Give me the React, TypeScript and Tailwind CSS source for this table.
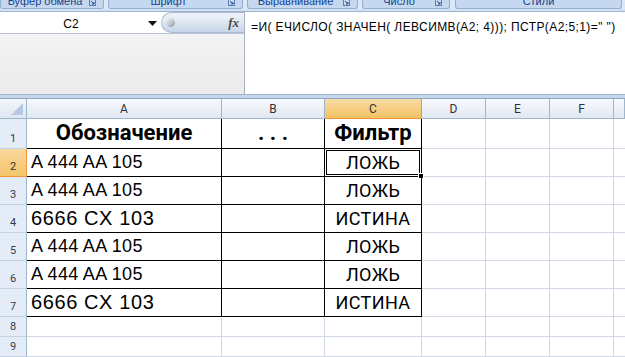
import React from "react";

const groups = [
  { label: "Буфер обмена", w: "w-[104px]", ml: "ml-0", launcher: true },
  { label: "Шрифт", w: "w-[135px]", ml: "ml-[4px]", launcher: true },
  { label: "Выравнивание", w: "w-[111px]", ml: "ml-[4px]", launcher: true },
  { label: "Число", w: "w-[88px]", ml: "ml-[4px]", launcher: true },
  { label: "Стили", w: "w-[167px]", ml: "ml-[5px]", launcher: false },
];

type Row = {
  n: number;
  a?: string;
  b?: string;
  c?: string;
  kind: "title" | "small" | "big" | "empty";
};

const rows: Row[] = [
  { n: 1, a: "Обозначение", b: ". . .", c: "Фильтр", kind: "title" },
  { n: 2, a: "A 444 AA 105", c: "ЛОЖЬ", kind: "small" },
  { n: 3, a: "A 444 AA 105", c: "ЛОЖЬ", kind: "small" },
  { n: 4, a: "6666 CX 103", c: "ИСТИНА", kind: "big" },
  { n: 5, a: "A 444 AA 105", c: "ЛОЖЬ", kind: "small" },
  { n: 6, a: "A 444 AA 105", c: "ЛОЖЬ", kind: "small" },
  { n: 7, a: "6666 CX 103", c: "ИСТИНА", kind: "big" },
  { n: 8, kind: "empty" },
  { n: 9, kind: "empty" },
];

const cols = ["A", "B", "C", "D", "E", "F", ""];

function Launcher() {
  return (
    <svg width="7" height="7" viewBox="0 0 7 7" className="mb-[1px]">
      <rect x="0.5" y="0.5" width="6" height="6" fill="none" stroke="#5d7fb0" strokeWidth="1" />
      <path d="M2 2 L5 5 M5 3 V5 H3" stroke="#2b4f85" strokeWidth="1" fill="none" />
    </svg>
  );
}

export default function App() {
  return (
    <div className="w-[625px] h-[357px] overflow-hidden bg-white flex flex-col" style={{ fontFamily: '"Liberation Sans", Arial, sans-serif' }}>
      {/* Ribbon group labels (clipped) */}
      <div className="h-[9px] flex bg-[#dce8f6] overflow-hidden">
        {groups.map((g) => (
          <div
            key={g.label}
            className={`${g.w} ${g.ml} h-[9px] flex items-start bg-[#c5d8f0] border-x border-b border-[#93afd4] rounded-b-[3px] overflow-hidden`}
          >
            <div className="flex-1 text-center text-[11px] leading-[11px] -mt-[4px] text-[#15428b] whitespace-nowrap">
              {g.label}
            </div>
            {g.launcher && (
              <div className="pr-[7px] -mt-[1px]">
                <Launcher />
              </div>
            )}
          </div>
        ))}
      </div>
      <div className="h-[2px] bg-[#d3e1f2]" />
      <div className="h-[1px] bg-[#9fb4cf]" />

      {/* Formula bar */}
      <div className="h-[82px] flex">
        <div className="w-[245px] flex flex-col border-r border-[#a6b2c2]">
          <div className="h-[22px] flex items-center bg-white border-b border-[#b9c4d3]">
            <div className="w-[142px] text-center text-[12px] leading-[12px] pt-[3px] text-black">C2</div>
            <svg width="9" height="5" viewBox="0 0 9 5" className="ml-[6px] mt-[2px]">
              <path d="M0 0 H9 L4.5 5 Z" fill="#111" />
            </svg>
            <div className="ml-[4px] flex-1 h-full rounded-l-[11px] border border-r-0 border-[#a9bbd3] bg-gradient-to-b from-[#f1f5fa] via-[#dde6f1] to-[#c7d5e7] flex items-center pl-[4px] pr-[5px]">
              <div className="w-[9px] h-[9px] rounded-full bg-gradient-to-br from-[#f4f4f4] via-[#c9ccd1] to-[#8d939c]" />
              <div className="flex-1" />
              <span
                className="text-[13px] leading-[13px] italic font-bold text-[#4a4a4a]"
                style={{ fontFamily: '"Liberation Serif", "Times New Roman", serif' }}
              >
                fx
              </span>
            </div>
          </div>
          <div className="flex-1 bg-gradient-to-b from-[#f3f3f3] to-[#ebebeb]" />
        </div>
        <div className="flex-1 bg-white pl-[6px] pt-[8px]">
          <div className="text-[12px] leading-[14px] tracking-[0.4px] text-black whitespace-nowrap">
            =И( ЕЧИСЛО( ЗНАЧЕН( ЛЕВСИМВ(A2; 4))); ПСТР(A2;5;1)=" ")
          </div>
        </div>
      </div>

      {/* strip */}
      <div className="h-[1px] bg-[#a3b4cc]" />
      <div className="h-[3px] bg-[#c6d7ec]" />
      <div className="h-[1px] bg-[#8fa7c6]" />

      {/* Grid */}
      <div className="grid grid-cols-[27px_195px_103px_97px_64px_64px_64px_1fr] grid-rows-[20px_30px_28px_28px_28px_28px_28px_28px_20px_20px]">
        {/* header row */}
        <div className="relative bg-gradient-to-b from-[#f4f7fb] to-[#dfe7f2] border-r border-b border-[#9eb6ce]">
          <svg width="12" height="12" viewBox="0 0 12 12" className="absolute right-[3px] bottom-[3px]">
            <path d="M12 0 V12 H0 Z" fill="#b7c9e2" />
          </svg>
        </div>
        {cols.map((c, i) =>
          c === "C" ? (
            <div
              key={i}
              className="flex items-center justify-center bg-gradient-to-b from-[#f9dba3] to-[#f1c263] border-r border-b border-[#f29536] text-[12px] text-[#333]"
              style={{ fontFamily: "Roboto, sans-serif" }}
            >
              {c}
            </div>
          ) : (
            <div
              key={i}
              className="flex items-center justify-center bg-gradient-to-b from-[#f7f9fc] to-[#e1e8f2] border-r border-b border-[#9eb6ce] text-[12px] text-[#333]"
              style={{ fontFamily: "Roboto, sans-serif" }}
            >
              {c}
            </div>
          )
        )}

        {rows.map((r) => (
          <React.Fragment key={r.n}>
            {/* row header */}
            {r.n === 2 ? (
              <div
                className="flex items-end justify-center pb-[4px] bg-gradient-to-b from-[#f9d89d] to-[#f3c56b] border-r border-b border-[#f29536] text-[11px] leading-[11px] text-[#333]"
                style={{ fontFamily: "Roboto, sans-serif" }}
              >
                {r.n}
              </div>
            ) : (
              <div
                className="flex items-end justify-center pb-[4px] bg-[#e4ecf7] border-r border-[#9eb6ce] border-b border-b-[#c5d2e3] text-[11px] leading-[11px] text-[#333c4c]"
                style={{ fontFamily: "Roboto, sans-serif" }}
              >
                {r.n}
              </div>
            )}

            {r.kind === "empty" ? (
              <>
                <div className="border-r border-b border-[#d0d7e5]" />
                <div className="border-r border-b border-[#d0d7e5]" />
                <div className="border-r border-b border-[#d0d7e5]" />
              </>
            ) : r.kind === "title" ? (
              <>
                <div
                  className="flex items-end justify-center pb-[2px] border-r border-b border-black text-[22px] leading-[26px] font-bold text-black"
                  style={{ fontFamily: "Roboto, sans-serif" }}
                >
                  {r.a}
                </div>
                <div
                  className="flex items-end justify-center pb-[2px] border-r border-b border-black text-[22px] leading-[26px] font-bold text-black"
                  style={{ fontFamily: "Roboto, sans-serif" }}
                >
                  {r.b}
                </div>
                <div
                  className="flex items-end justify-center pb-[2px] border-r border-b border-black text-[22px] leading-[26px] font-bold text-black"
                  style={{ fontFamily: "Roboto, sans-serif" }}
                >
                  {r.c}
                </div>
              </>
            ) : (
              <>
                {r.kind === "big" ? (
                  <div className="flex items-end pl-[4px] pb-[3px] border-r border-b border-black text-[20px] leading-[21px] tracking-[0.6px] text-black whitespace-nowrap">
                    {r.a}
                  </div>
                ) : (
                  <div className="flex items-end pl-[4px] pb-[4px] border-r border-b border-black text-[18px] leading-[19px] tracking-[0.3px] text-black whitespace-nowrap">
                    {r.a}
                  </div>
                )}
                <div className="border-r border-b border-black" />
                <div
                  className="relative flex items-end justify-center pb-[3px] border-r border-b border-black text-[18px] leading-[20px] tracking-[0.4px] text-black"
                  style={{ fontFamily: "Roboto, sans-serif" }}
                >
                  {r.c}
                  {r.n === 2 && (
                    <div className="absolute -left-px -top-px -right-px -bottom-px border border-black shadow-[inset_0_0_0_1px_#ffffff,inset_0_0_0_2px_#000000]">
                      <div className="absolute -right-[3px] -bottom-[3px] w-[6px] h-[6px] bg-black border border-white" />
                    </div>
                  )}
                </div>
              </>
            )}
            <div className="border-r border-b border-[#d0d7e5]" />
            <div className="border-r border-b border-[#d0d7e5]" />
            <div className="border-r border-b border-[#d0d7e5]" />
            <div className="border-b border-[#d0d7e5]" />
          </React.Fragment>
        ))}
      </div>
    </div>
  );
}
